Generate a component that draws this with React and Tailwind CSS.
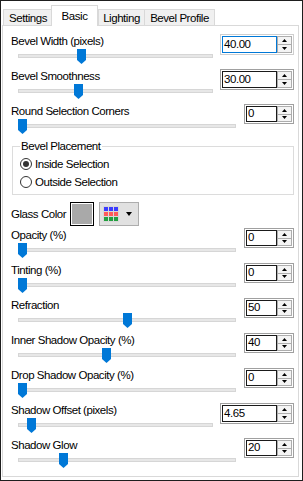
import React from "react";

const font = { fontFamily: '"Liberation Sans", Arial, sans-serif' };

function Thumb({ left }) {
  return (
    <svg
      className="absolute top-[1px]"
      style={{ left }}
      width="9"
      height="15"
      viewBox="0 0 9 15"
    >
      <path d="M0 0H9V11L4.5 15L0 11Z" fill="#0078d7" />
    </svg>
  );
}

function Arrow({ up }) {
  return (
    <svg width="5" height="3" viewBox="0 0 5 3">
      {up ? <path d="M0 3H5L2.5 0Z" fill="#000" /> : <path d="M0 0H5L2.5 3Z" fill="#000" />}
    </svg>
  );
}

function SpinBox({ value, wide, focused }) {
  return (
    <div
      className={`flex p-[1px] border ${wide ? "w-[74px] h-[21px]" : "w-[50px] h-[20px]"} ${
        focused ? "border-[#cfcfcf]" : "border-[#a0a0a0]"
      }`}
    >
      <div
        className={`flex-1 flex items-center pl-[1px] bg-white border ${
          focused ? "border-[#0078d7]" : "border-[#1a1a1a]"
        }`}
      >
        {value}
      </div>
      <div className="w-[15px] flex flex-col">
        <div className="flex-1 flex items-center justify-center border border-[#adadad] bg-[#f4f4f4]">
          <Arrow up />
        </div>
        <div className="flex-1 flex items-center justify-center border border-t-0 border-[#adadad] bg-[#f4f4f4]">
          <Arrow />
        </div>
      </div>
    </div>
  );
}

function SliderRow({ label, value, wide, thumb, focused }) {
  return (
    <div className="flex h-[35px] pl-[8px] pr-[4px]">
      <div className="flex-1 flex flex-col">
        <div className="h-[14px] leading-[14px] whitespace-nowrap">{label}</div>
        <div className={`relative ml-[7px] h-[21px] ${wide ? "w-[195px]" : "w-[218px]"}`}>
          <div className="mt-[6px] h-[4px] bg-[#e7e7e7] border border-[#d6d6d6]" />
          <Thumb left={thumb} />
        </div>
      </div>
      <SpinBox value={value} wide={wide} focused={focused} />
    </div>
  );
}

function Radio({ label, checked }) {
  return (
    <div className="flex items-center h-[18px]">
      <span className="w-[12px] h-[12px] rounded-full border border-[#333333] bg-white flex items-center justify-center">
        {checked && <span className="w-[6px] h-[6px] rounded-full bg-[#333333]" />}
      </span>
      <span className="ml-[3px] leading-[14px]">{label}</span>
    </div>
  );
}

function GridIcon() {
  const colors = ["#3b3bff", "#ff5a5a", "#22a040"];
  return (
    <svg width="16" height="16" viewBox="0 0 16 16">
      <rect x="0" y="0" width="16" height="16" fill="#d8d8d8" />
      {colors.map((c, r) =>
        [0, 1, 2].map((col) => (
          <rect key={`${r}-${col}`} x={1 + col * 5} y={1 + r * 5} width="4" height="4" fill={c} />
        ))
      )}
    </svg>
  );
}

export default function App() {
  const top = [
    { label: "Bevel Width (pixels)", value: "40.00", wide: true, thumb: 59, focused: true },
    { label: "Bevel Smoothness", value: "30.00", wide: true, thumb: 56 },
    { label: "Round Selection Corners", value: "0", wide: false, thumb: 0 },
  ];
  const bottom = [
    { label: "Opacity (%)", value: "0", wide: false, thumb: 0 },
    { label: "Tinting (%)", value: "0", wide: false, thumb: 0 },
    { label: "Refraction", value: "50", wide: false, thumb: 105 },
    { label: "Inner Shadow Opacity (%)", value: "40", wide: false, thumb: 84 },
    { label: "Drop Shadow Opacity (%)", value: "0", wide: false, thumb: 0 },
    { label: "Shadow Offset (pixels)", value: "4.65", wide: true, thumb: 9 },
    { label: "Shadow Glow", value: "20", wide: false, thumb: 41 },
  ];

  return (
    <div
      className="w-[303px] h-[481px] bg-white border border-[#1e1e1e] flex flex-col text-[11.5px] tracking-[-0.45px] text-black"
      style={font}
    >
      {/* Tabs */}
      <div className="flex items-end h-[24px] pl-[2px] shrink-0">
        <div className="w-[50px] h-[16px] border border-b-0 border-[#d9d9d9] bg-[#f0f0f0] text-center pt-[1px] leading-[14px]">
          Settings
        </div>
        <div className="relative z-10 -ml-[2px] -mb-[1px] w-[47px] h-[21px] border border-b-0 border-[#d9d9d9] bg-white text-center pt-[3px] leading-[14px]">
          Basic
        </div>
        <div className="w-[47px] h-[16px] border border-b-0 border-[#d9d9d9] bg-[#f0f0f0] text-center pt-[1px] leading-[14px]">
          Lighting
        </div>
        <div className="-ml-[1px] w-[71px] h-[16px] border border-b-0 border-[#d9d9d9] bg-[#f0f0f0] text-center pt-[1px] leading-[14px]">
          Bevel Profile
        </div>
      </div>

      {/* Panel */}
      <div className="flex-1 ml-[1px] mr-[3px] mb-[3px] border border-[#d9d9d9] bg-white pt-[8px] flex flex-col">
        {top.map((r) => (
          <SliderRow key={r.label} {...r} />
        ))}

        <fieldset className="mt-[1px] ml-[9px] mr-[4px] border border-[#dcdcdc] pl-[7px] pt-[3px] pb-[3px]">
          <legend className="px-[1px] leading-[12px]">Bevel Placement</legend>
          <Radio label="Inside Selection" checked />
          <Radio label="Outside Selection" />
        </fieldset>

        <div className="mt-[7px] h-[24px] flex items-center pl-[8px]">
          <span className="w-[59px] leading-[14px] whitespace-nowrap">Glass Color</span>
          <div className="w-[24px] h-[24px] border border-black p-[1px] bg-white">
            <div className="w-full h-full bg-[#a9a9a9]" />
          </div>
          <div className="ml-[5px] w-[40px] h-[24px] border border-[#adadad] bg-[#e1e1e1] flex items-center pl-[3px]">
            <GridIcon />
            <span className="ml-[7px] flex">
              <svg width="6" height="4" viewBox="0 0 6 4">
                <path d="M0 0H6L3 4Z" fill="#000" />
              </svg>
            </span>
          </div>
        </div>

        <div className="mt-[2px]">
          {bottom.map((r) => (
            <SliderRow key={r.label} {...r} />
          ))}
        </div>
      </div>
    </div>
  );
}
